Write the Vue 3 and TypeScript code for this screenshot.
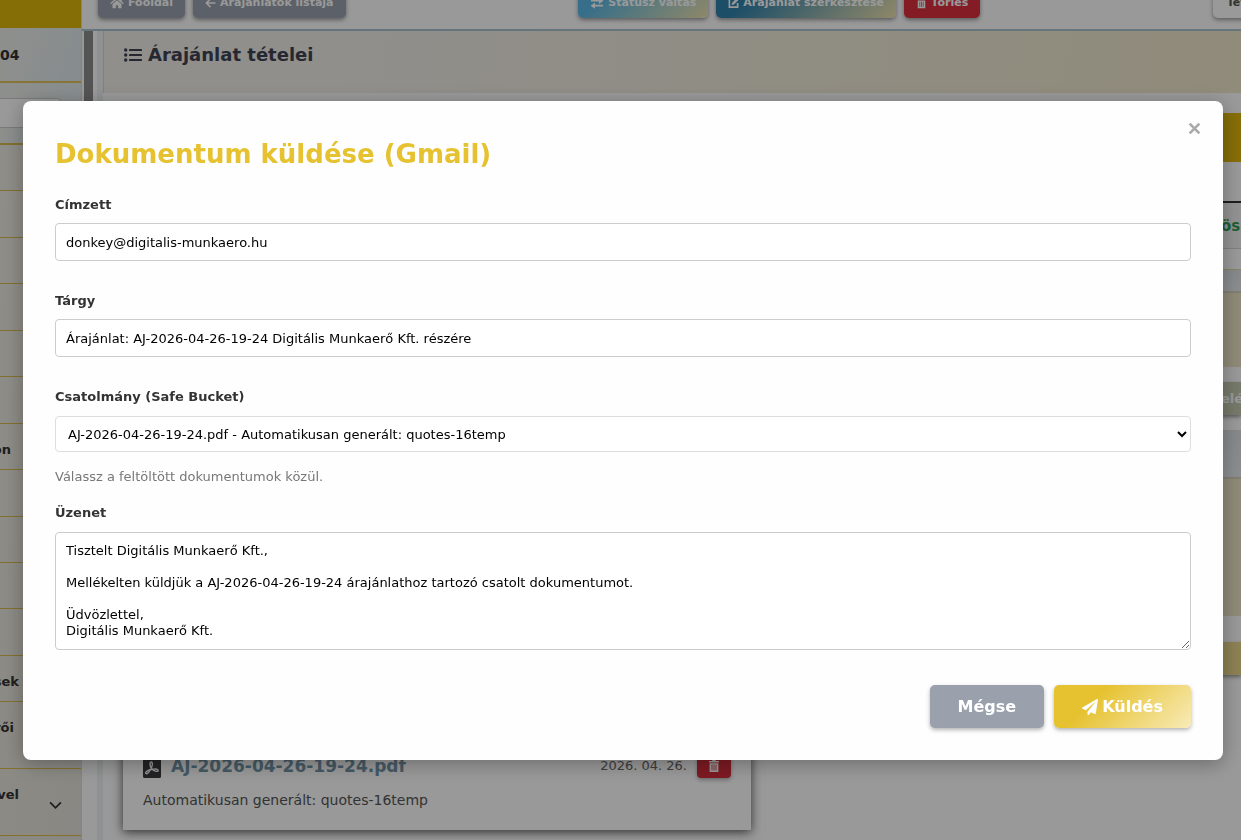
<script setup lang="ts">
import { ref } from 'vue'

interface NavItem {
  label: string
  tall?: boolean
  chevron?: boolean
}

const navItems: NavItem[] = [
  { label: '' }, { label: '' }, { label: '' }, { label: '' }, { label: '' }, { label: '' },
  { label: 'on' }, { label: '' }, { label: '' }, { label: '' }, { label: '' },
  { label: 'sek' },
  { label: 'rői', tall: true },
  { label: 'vel', tall: true, chevron: true },
]

const recipient = ref('donkey@digitalis-munkaero.hu')
const subject = ref('Árajánlat: AJ-2026-04-26-19-24 Digitális Munkaerő Kft. részére')
const attachment = ref('AJ-2026-04-26-19-24.pdf - Automatikusan generált: quotes-16temp')
const message = ref(
  'Tisztelt Digitális Munkaerő Kft.,\n\nMellékelten küldjük a AJ-2026-04-26-19-24 árajánlathoz tartozó csatolt dokumentumot.\n\nÜdvözlettel,\nDigitális Munkaerő Kft.',
)
</script>

<template>
  <div class="page">
    <aside class="sidebar">
      <div class="brand"></div>
      <div class="date">04</div>
      <div class="search"><input type="text" aria-label="Keresés" /></div>
      <nav>
        <a v-for="(item, i) in navItems" :key="i" href="#" class="nav-item" :class="{ tall: item.tall }">
          <span class="nav-label">{{ item.label }}</span>
          <svg v-if="item.chevron" class="chevron" viewBox="0 0 12 8"><path d="M1 1.2l5 5 5-5" fill="none" stroke="currentColor" stroke-width="1.6" /></svg>
        </a>
      </nav>
    </aside>

    <div class="main">
      <header class="topbar">
        <div class="group">
          <button class="btn grey">
            <svg viewBox="0 0 576 512" class="ic"><path fill="currentColor" d="M280.37 148.26L96 300.11V464a16 16 0 0 0 16 16l112.06-.29a16 16 0 0 0 15.92-16V368a16 16 0 0 1 16-16h64a16 16 0 0 1 16 16v95.64a16 16 0 0 0 16 16.05L464 480a16 16 0 0 0 16-16V300L295.67 148.26a12.19 12.19 0 0 0-15.3 0zM571.6 251.47L488 182.56V44.05a12 12 0 0 0-12-12h-56a12 12 0 0 0-12 12v72.61L318.47 43a48 48 0 0 0-61 0L4.34 251.47a12 12 0 0 0-1.6 16.9l25.5 31A12 12 0 0 0 45.15 301l235.22-193.74a12.19 12.19 0 0 1 15.3 0L530.9 301a12 12 0 0 0 16.9-1.6l25.5-31a12 12 0 0 0-1.7-16.93z" /></svg>
            Főoldal
          </button>
          <button class="btn grey">
            <svg viewBox="0 0 12 12" class="ic small"><path d="M6 1.5L1.5 6 6 10.500M1.800 6H11.500" fill="none" stroke="currentColor" stroke-width="1.8" /></svg>
            Árajánlatok listája
          </button>
        </div>
        <div class="group">
          <button class="btn sky">
            <svg viewBox="0 0 14 12" class="ic"><path d="M1 2.700h8V.5l4.500 3.300L9 7V4.500H1zM13 7.700H5V5.500L.5 8.700 5 11.800V9.500h8z" fill="currentColor" /></svg>
            Státusz váltás
          </button>
          <button class="btn blue">
            <svg viewBox="0 0 12 12" class="ic small"><path d="M6.500 1.500H1.500v9h9V6" fill="none" stroke="currentColor" stroke-width="1.800" /><path d="M4 8.200l.5-2.500L9.500.700l2 2-5 5z" fill="currentColor" /></svg>
            Árajánlat szerkesztése
          </button>
          <button class="btn red">
            <svg viewBox="0 0 12 14" class="ic small"><path d="M1 2h3l.6-1.200h2.800L8 2h3v1.400H1zM1.600 4.200h8.800V13H1.600z" fill="currentColor" /><path d="M4 5.500v6M6 5.500v6M8 5.500v6" stroke="#dc2f3f" stroke-width=".8" /></svg>
            Törlés
          </button>
        </div>
        <button class="btn white">Tev</button>
      </header>

      <div class="scroller">
        <div class="thumb"></div>
        <div class="content">
          <section class="heading">
            <svg viewBox="0 0 18 14" class="list-ic"><g fill="currentColor"><circle cx="1.700" cy="2" r="1.700" /><circle cx="1.700" cy="7" r="1.700" /><circle cx="1.700" cy="12" r="1.700" /><rect x="5" y="1" width="13" height="2" rx=".6" /><rect x="5" y="6" width="13" height="2" rx=".6" /><rect x="5" y="11" width="13" height="2" rx=".6" /></g></svg>
            <h2>Árajánlat tételei</h2>
          </section>
          <div class="columns">
            <article class="doc-card">
              <div class="doc-row">
                <svg viewBox="0 0 18 24" class="pdf-ic">
                  <path d="M0 0h10v6h8v16.500a1.500 1.500 0 0 1-1.500 1.500h-15A1.500 1.500 0 0 1 0 22.500zM11.500 0L18 4.800H11.500z" fill="#38383c" />
                  <path d="M8.300 14.500C6.800 11.500 6.500 8 8.200 8s1.500 3.300 0 6.500c-1.800 3.600-4.200 6-5.300 5-1.100-1.200 1.500-3.200 5-4 3.700-.8 7.300-.7 7.300.9 0 1.700-3.700 1.300-6.900-1.900z" fill="none" stroke="#f0f0f0" stroke-width="1.400" />
                </svg>
                <a href="#" class="doc-name">AJ-2026-04-26-19-24.pdf</a>
                <span class="doc-date">2026. 04. 26.</span>
                <button class="trash" aria-label="Törlés">
                  <svg viewBox="0 0 12 14"><path d="M1 2h3l.6-1.200h2.800L8 2h3v1.400H1zM1.600 4.200h8.800V13H1.600z" fill="#fff" /><path d="M4 5.500v6M6 5.500v6M8 5.500v6" stroke="#d22c3a" stroke-width=".8" /></svg>
                </button>
              </div>
              <p>Automatikusan generált: quotes-16temp</p>
            </article>
            <div class="panels">
              <div class="p-gold"></div>
              <div class="p-blank"></div>
              <div class="p-total">öss</div>
              <div class="p-gap"></div>
              <div class="p-head"></div>
              <div class="p-beige"></div>
              <button class="p-btn green">elé</button>
              <div class="p-head second"></div>
              <div class="p-beige long"></div>
              <div class="p-btn yellow"></div>
            </div>
          </div>
        </div>
      </div>
    </div>

    <div class="overlay">
      <form class="modal" role="dialog" aria-labelledby="dlg-title" @submit.prevent>
        <button type="button" class="close" aria-label="Bezárás">
          <svg viewBox="0 0 12 12"><path d="M1.500 1.500l9 9M10.500 1.500l-9 9" stroke="currentColor" stroke-width="2.500" /></svg>
        </button>
        <h1 id="dlg-title">Dokumentum küldése (Gmail)</h1>
        <div class="field">
          <label for="to">Címzett</label>
          <input id="to" v-model="recipient" type="email" />
        </div>
        <div class="field">
          <label for="subject">Tárgy</label>
          <input id="subject" v-model="subject" type="text" />
        </div>
        <div class="field attach">
          <label for="attachment">Csatolmány (Safe Bucket)</label>
          <select id="attachment" v-model="attachment">
            <option>{{ attachment }}</option>
          </select>
          <small>Válassz a feltöltött dokumentumok közül.</small>
        </div>
        <div class="field">
          <label for="message">Üzenet</label>
          <textarea id="message" v-model="message"></textarea>
        </div>
        <div class="buttons">
          <button type="button" class="cancel">Mégse</button>
          <button type="submit" class="send">
            <svg viewBox="0 0 512 512"><path fill="currentColor" d="M476 3.200L12.500 270.600c-18.100 10.400-15.800 35.600 2.200 43.200L121 358.400l287.300-253.200c5.500-4.900 13.300 2.600 8.600 8.300L176 407v80.500c0 23.600 28.500 32.900 42.500 15.800L282 426l124.600 52.200c14.200 6 30.400-2.900 33-18.200l72-432C515 7.800 493.300-6.800 476 3.200z" /></svg>
            Küldés
          </button>
        </div>
      </form>
    </div>
  </div>
</template>

<style>
body {
  margin: 0;
}
</style>

<style scoped>
* {
  box-sizing: border-box;
}
.page {
  display: flex;
  height: 100vh;
  overflow: hidden;
  background: #fff;
  color: #333;
  font: 13px/16px Verdana, 'DejaVu Sans', sans-serif;
}
button,
input,
select,
textarea {
  font: inherit;
}
svg {
  display: block;
  flex: none;
}

/* sidebar */
.sidebar {
  flex: none;
  width: 81px;
  overflow: hidden;
  background: linear-gradient(100deg, #efede3, #e4e2da);
}
.brand {
  height: 28px;
  background: #dfb70d;
}
.date {
  height: 55px;
  padding-top: 19px;
  border-bottom: 2px solid #dfc35a;
  background: linear-gradient(110deg, #eef0ea, #dfe9ee);
  font-size: 14px;
  font-weight: bold;
}
.search {
  height: 62px;
  padding: 15px 20px 0 0;
  border-bottom: 2px solid #d9bc4c;
  background: linear-gradient(110deg, #ecefe9, #dfe9ee);
}
.search input {
  display: block;
  width: 100%;
  height: 30px;
  border: 1px solid #ccc;
  border-left: 0;
  border-radius: 0 4px 4px 0;
  background: #fff;
}
.nav-item {
  display: flex;
  align-items: flex-start;
  justify-content: space-between;
  height: 46px;
  padding: 18px 19px 0 0;
  border-bottom: 1px solid #d9bc4c;
  color: #333;
  font-weight: bold;
  text-decoration: none;
}
.nav-item:nth-child(even):nth-child(-n + 8),
.nav-item:nth-child(11) {
  height: 47px;
}
.nav-item.tall {
  height: 67px;
}
.nav-label {
  display: flex;
  justify-content: flex-end;
  width: 19px;
}
.nav-item:nth-child(7) .nav-label {
  width: 11px;
}
.nav-item:nth-child(13) .nav-label {
  width: 14px;
}
.chevron {
  width: 13px;
  height: 9px;
  margin-top: 14px;
}

/* top bar */
.main {
  display: flex;
  flex: 1;
  flex-direction: column;
  min-width: 0;
  border-left: 1px solid #ddd;
}
.topbar {
  display: flex;
  flex: none;
  align-items: flex-end;
  justify-content: space-between;
  height: 31px;
  padding: 0 0 11px 16px;
  overflow: hidden;
  border-bottom: 2px solid #abc3cf;
}
.group {
  display: flex;
  gap: 8px;
}
.btn {
  display: flex;
  flex: none;
  align-items: center;
  justify-content: center;
  gap: 4px;
  height: 31px;
  padding: 0 12px;
  border: 0;
  border-radius: 5px;
  box-shadow: 0 2px 4px rgba(0, 0, 0, 0.4);
  color: #fff;
  font-size: 11px;
  font-weight: bold;
  white-space: nowrap;
}
.grey {
  background: #9aa1ad;
}
.sky {
  background: linear-gradient(135deg, #5cb8e4 20%, #efe3b0);
}
.blue {
  background: linear-gradient(135deg, #2f82ae 20%, #efe3b0);
}
.red {
  background: #dc2f3f;
}
.white {
  width: 48px;
  margin-right: -20px;
  background: #fff;
  color: #555;
}
.ic {
  width: 14px;
  height: 12px;
}
.ic.small {
  width: 11px;
}

/* page content */
.scroller {
  display: flex;
  flex: 1;
  min-height: 0;
}
.thumb {
  flex: none;
  width: 11px;
  height: 560px;
  border-left: 2px solid #fff;
  background: #8c8c8c;
}
.content {
  flex: 1;
  min-width: 0;
  margin-left: 4px;
  border-left: 6px solid #eef2f3;
  background: #fff;
}
.heading {
  display: flex;
  align-items: flex-start;
  gap: 6px;
  height: 62px;
  padding: 14px 20px;
  border-left: 1px solid #e6d9a5;
  background: linear-gradient(100deg, #f0eee9 20%, #f1e8cc);
  color: #3f4351;
}
.heading h2 {
  margin: 0;
  font-size: 18px;
  line-height: 20px;
}
.list-ic {
  width: 18px;
  height: 14px;
  margin-top: 3px;
}
.columns {
  display: grid;
  grid-template-columns: 628px 1fr;
  gap: 40px;
  padding: 20px 0 0 20px;
}
.doc-card {
  display: flex;
  flex-direction: column;
  justify-content: flex-end;
  height: 717px;
  padding: 0 20px 21px;
  background: #fff;
  box-shadow: 0 2px 10px rgba(0, 0, 0, 0.7);
}
.doc-row {
  display: flex;
  align-items: center;
}
.doc-name {
  margin-left: 10px;
  color: #7396a8;
  font-size: 17px;
  font-weight: bold;
  text-decoration: none;
}
.doc-date {
  margin: 0 10px 0 auto;
  color: #666;
  font-size: 13px;
}
.doc-card p {
  margin: 13px 0 0;
  color: #555;
  font-size: 14px;
  line-height: 18px;
}
.pdf-ic {
  width: 18px;
  height: 24px;
}
.trash {
  display: flex;
  align-items: center;
  justify-content: center;
  width: 34px;
  height: 24px;
  padding: 0;
  border: 0;
  border-radius: 4px;
  background: #d22c3a;
  box-shadow: 0 2px 4px rgba(0, 0, 0, 0.3);
}
.trash svg {
  width: 12px;
  height: 14px;
}
.panels {
  display: flex;
  flex-direction: column;
  min-width: 0;
}
.p-gold {
  height: 49px;
  background: #dfb70d;
}
.p-blank {
  height: 41px;
  border-bottom: 2px solid #333;
}
.p-total {
  height: 46px;
  padding-left: calc(100% - 20px);
  overflow: hidden;
  border-bottom: 1px solid #d5d5d5;
  background: #f4f4f4;
  color: #2e9e56;
  font-size: 15px;
  font-weight: bold;
  line-height: 46px;
}
.p-gap {
  height: 21px;
  border-bottom: 1px solid #e8d9a8;
}
.p-head {
  height: 23px;
  border-bottom: 2px solid #d9d2bd;
  background: linear-gradient(#dfe3e6, #e9edef);
}
.p-head.second {
  height: 49px;
  margin-top: 15px;
}
.p-beige {
  height: 74px;
  background: #efe5c8;
}
.p-beige.long {
  height: 137px;
}
.p-btn {
  height: 33px;
  margin-top: 15px;
  border: 0;
  box-shadow: 0 2px 4px rgba(0, 0, 0, 0.4);
  color: #fff;
  font-weight: bold;
}
.p-btn.green {
  padding: 0 0 0 calc(100% - 20px);
  overflow: hidden;
  background: linear-gradient(90deg, #a8bda0, #c5cbb0);
  text-align: left;
}
.p-btn.yellow {
  margin-top: 26px;
  background: #ead88c;
}

/* dialog */
.overlay {
  position: fixed;
  inset: 0;
  display: flex;
  align-items: flex-start;
  justify-content: center;
  padding: 101px 18px 0 23px;
  background: rgba(0, 0, 0, 0.4);
}
.modal {
  position: relative;
  width: 100%;
  max-width: 1200px;
  padding: 37px 32px 32px;
  border-radius: 8px;
  background: #fefefe;
  box-shadow: 0 4px 20px rgba(0, 0, 0, 0.3);
}
.close {
  position: absolute;
  top: 21px;
  right: 22px;
  padding: 0;
  border: 0;
  background: none;
  color: #aaa;
}
.close svg {
  width: 13px;
  height: 13px;
}
h1 {
  margin: 0 0 27px;
  color: #e6c230;
  font-size: 26px;
  line-height: 32px;
}
.field {
  margin-bottom: 32px;
}
.field.attach {
  margin-bottom: 20px;
}
label {
  display: block;
  font-weight: bold;
}
.field input,
.field select,
.field textarea {
  display: block;
  width: 100%;
  height: 38px;
  margin-top: 10px;
  padding: 0 10px;
  border: 1px solid #ccc;
  border-radius: 4px;
  background: #fff;
  color: #000;
}
.field select {
  height: 36px;
  margin-top: 11px;
  padding: 0 8px;
  border-color: #ddd;
}
.field textarea {
  height: 118px;
  margin-top: 11px;
  padding: 10px;
}
small {
  display: block;
  margin-top: 17px;
  color: #777;
  font-size: 13px;
}
.buttons {
  display: flex;
  justify-content: flex-end;
  gap: 10px;
  margin-top: 35px;
}
.cancel,
.send {
  display: flex;
  align-items: center;
  justify-content: center;
  gap: 4px;
  height: 43px;
  padding: 0 28px;
  border: 0;
  border-radius: 5px;
  background: #9aa1ad;
  box-shadow: 0 2px 4px rgba(0, 0, 0, 0.3);
  color: #fff;
  font-size: 16px;
  font-weight: bold;
}
.send {
  background: linear-gradient(135deg, #e6c230 30%, #f8ebb8);
}
.send svg {
  width: 16px;
  height: 16px;
}
</style>
